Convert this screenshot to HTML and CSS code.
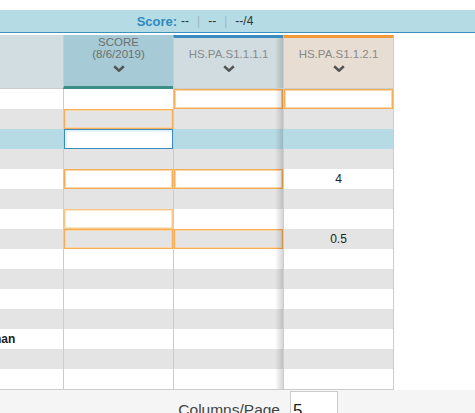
FILE: index.html
```html
<!DOCTYPE html>
<html lang="en">

<head>
    <meta charset="UTF-8" />
    <meta name="viewport" content="width=device-width, initial-scale=1.0" />
    <title>Gradebook - Standards</title>
    <link rel="stylesheet" href="styles.css">
</head>

<body>
    <!-- Score summary -->
    <div class="score-bar">
        <div class="score-inner">
            <span class="score-label">Score:</span>
            <span class="score-val">--</span>
            <span class="sep">|</span>
            <span class="score-val">--</span>
            <span class="sep">|</span>
            <span class="score-val">--/4</span>
        </div>
    </div>

    <!-- Grid (scrolled to the right a bit) -->
    <div class="grid-view">
        <div class="grid">
            <div class="row head">
                <div class="cell head-name"></div>
                <div class="cell head-col head-score">
                    <span class="head-title">SCORE</span>
                    <span class="head-title">(8/6/2019)</span>
                    <svg class="chev" viewBox="0 0 12 7"><polyline points="1.2,1.2 6,5.6 10.8,1.2" /></svg>
                </div>
                <div class="cell head-col head-std top-blue frozen">
                    <span class="head-title">HS.PA.S1.1.1.1</span>
                    <svg class="chev" viewBox="0 0 12 7"><polyline points="1.2,1.2 6,5.6 10.8,1.2" /></svg>
                </div>
                <div class="cell head-col head-std top-orange">
                    <span class="head-title">HS.PA.S1.1.2.1</span>
                    <svg class="chev" viewBox="0 0 12 7"><polyline points="1.2,1.2 6,5.6 10.8,1.2" /></svg>
                </div>
            </div>

            <div class="row">
                <div class="cell name"></div>
                <div class="cell"></div>
                <div class="cell frozen"><div class="box"></div></div>
                <div class="cell"><div class="box"></div></div>
            </div>
            <div class="row alt">
                <div class="cell name"></div>
                <div class="cell"><div class="box"></div></div>
                <div class="cell frozen"></div>
                <div class="cell"></div>
            </div>
            <div class="row selected">
                <div class="cell name"></div>
                <div class="cell"><div class="box focus"></div></div>
                <div class="cell frozen"></div>
                <div class="cell"></div>
            </div>
            <div class="row alt">
                <div class="cell name"></div>
                <div class="cell"></div>
                <div class="cell frozen"></div>
                <div class="cell"></div>
            </div>
            <div class="row">
                <div class="cell name"></div>
                <div class="cell"><div class="box"></div></div>
                <div class="cell frozen"><div class="box"></div></div>
                <div class="cell">4</div>
            </div>
            <div class="row alt">
                <div class="cell name"></div>
                <div class="cell"></div>
                <div class="cell frozen"></div>
                <div class="cell"></div>
            </div>
            <div class="row">
                <div class="cell name"></div>
                <div class="cell"><div class="box soft"></div></div>
                <div class="cell frozen"></div>
                <div class="cell"></div>
            </div>
            <div class="row alt">
                <div class="cell name"></div>
                <div class="cell"><div class="box"></div></div>
                <div class="cell frozen"><div class="box"></div></div>
                <div class="cell">0.5</div>
            </div>
            <div class="row">
                <div class="cell name"></div>
                <div class="cell"></div>
                <div class="cell frozen"></div>
                <div class="cell"></div>
            </div>
            <div class="row alt">
                <div class="cell name"></div>
                <div class="cell"></div>
                <div class="cell frozen"></div>
                <div class="cell"></div>
            </div>
            <div class="row">
                <div class="cell name"></div>
                <div class="cell"></div>
                <div class="cell frozen"></div>
                <div class="cell"></div>
            </div>
            <div class="row alt">
                <div class="cell name"></div>
                <div class="cell"></div>
                <div class="cell frozen"></div>
                <div class="cell"></div>
            </div>
            <div class="row">
                <div class="cell name">Jonathan</div>
                <div class="cell"></div>
                <div class="cell frozen"></div>
                <div class="cell"></div>
            </div>
            <div class="row alt">
                <div class="cell name"></div>
                <div class="cell"></div>
                <div class="cell frozen"></div>
                <div class="cell"></div>
            </div>
            <div class="row">
                <div class="cell name"></div>
                <div class="cell"></div>
                <div class="cell frozen"></div>
                <div class="cell"></div>
            </div>
        </div>
    </div>

    <!-- Paging -->
    <div class="pager">
        <label class="pager-label" for="perPage">Columns/Page</label>
        <input class="pager-input" id="perPage" type="text" value="5" />
    </div>
</body>

</html>
```

FILE: styles.css
```css
html,
body {
    margin: 0;
    padding: 0;
    font-family: 'Liberation Sans', Arial, sans-serif;
    color: #222;
    background: #fff;
    overflow: hidden;
}

/* Score bar */
.score-bar {
    margin-top: 10px;
    height: 22px;
    background-color: #b5dbe5;
    border-bottom: 1px solid #3d8fc0;
}

.score-inner {
    width: 390px;
    height: 22px;
    display: flex;
    justify-content: center;
    align-items: center;
    font-size: 12px;
    color: #333;
}

.score-label {
    font-weight: bold;
    font-size: 13px;
    color: #2f8ac1;
    margin-right: 4px;
}

.sep {
    color: #9cb9c2;
    margin: 0 8px;
}

/* Grid */
.grid-view {
    margin-top: 2px;
    overflow: hidden;
}

.grid {
    width: 440px;
    margin-left: -46px;
    border-bottom: 1px solid #ccc;
}

.row {
    display: grid;
    grid-template-columns: 109px 110px 110px 111px;
    height: 20px;
    background-color: #fff;
}

.row.alt {
    background-color: #e4e4e4;
}

.row.selected {
    background-color: #b6dbe5;
}

.cell {
    position: relative;
    box-sizing: border-box;
    border-left: 1px solid #ccc;
    display: flex;
    justify-content: center;
    align-items: center;
    font-size: 12px;
    color: #222;
}

.cell:last-child {
    border-right: 1px solid #ccc;
}

.cell.name {
    border-left: none;
    justify-content: flex-start;
    padding-left: 8px;
    font-weight: bold;
    font-size: 12px;
    color: #222;
}

/* frozen column edge shadow */
.cell.frozen::after {
    content: '';
    position: absolute;
    top: 0;
    right: 0;
    bottom: 0;
    width: 8px;
    background: linear-gradient(to right, rgba(0, 0, 0, 0), rgba(0, 0, 0, 0.16));
    pointer-events: none;
}

/* editable score boxes */
.box {
    position: absolute;
    inset: 0;
    border: 1px solid #f4ad58;
    box-shadow: inset 0 0 0 1px #fad7a8;
}

.box.soft {
    border-color: #f8c785;
    box-shadow: inset 0 0 0 1px #fde6c6;
    background-color: #fff;
}

.box.focus {
    border-color: #3a8cc0;
    box-shadow: inset 1px 1px 0 1px #e4f1f7;
    background-color: #fff;
}

/* Header */
.row.head {
    height: 54px;
    background-color: #fff;
}

.head-name {
    border-left: none;
    background-color: #d2dde1;
    border-bottom: 1px solid #ccc;
}

.head-col {
    flex-direction: column;
    justify-content: flex-end;
    padding-bottom: 16px;
    font-size: 11.5px;
    color: #6e6e6e;
    text-align: center;
}

.head-score {
    background-color: #a6cbd6;
    border-bottom: 3px solid #3b8f86;
    padding-bottom: 14px;
}

.head-std {
    color: #8a8a8a;
    border-bottom: 1px solid #ccc;
}

.top-blue {
    background-color: #d1dce0;
    border-top: 3px solid #3a8cc0;
}

.top-orange {
    background-color: #e7ddd2;
    border-top: 3px solid #f39a3d;
}

.head-title {
    display: block;
    height: 12px;
    line-height: 12px;
    white-space: nowrap;
}

.chev {
    width: 12px;
    height: 7px;
    margin-top: 5px;
}

.chev polyline {
    fill: none;
    stroke: #555;
    stroke-width: 2.6;
}

/* Paging */
.pager {
    display: flex;
    justify-content: flex-end;
    align-items: flex-start;
    gap: 10px;
    padding-right: 137px;
    height: 23px;
    overflow: hidden;
    background-color: #f5f5f5;
}

.pager-label {
    font-size: 15.5px;
    line-height: 18px;
    color: #444;
    padding-top: 11px;
}

.pager-input {
    box-sizing: border-box;
    width: 48px;
    height: 40px;
    flex-shrink: 0;
    margin: 1px 0 0 0;
    padding: 0 2px;
    border: 1px solid #ccc;
    border-radius: 0;
    font-family: 'Liberation Sans', Arial, sans-serif;
    font-size: 17px;
    color: #222;
    background: #fff;
    outline: none;
}
```
